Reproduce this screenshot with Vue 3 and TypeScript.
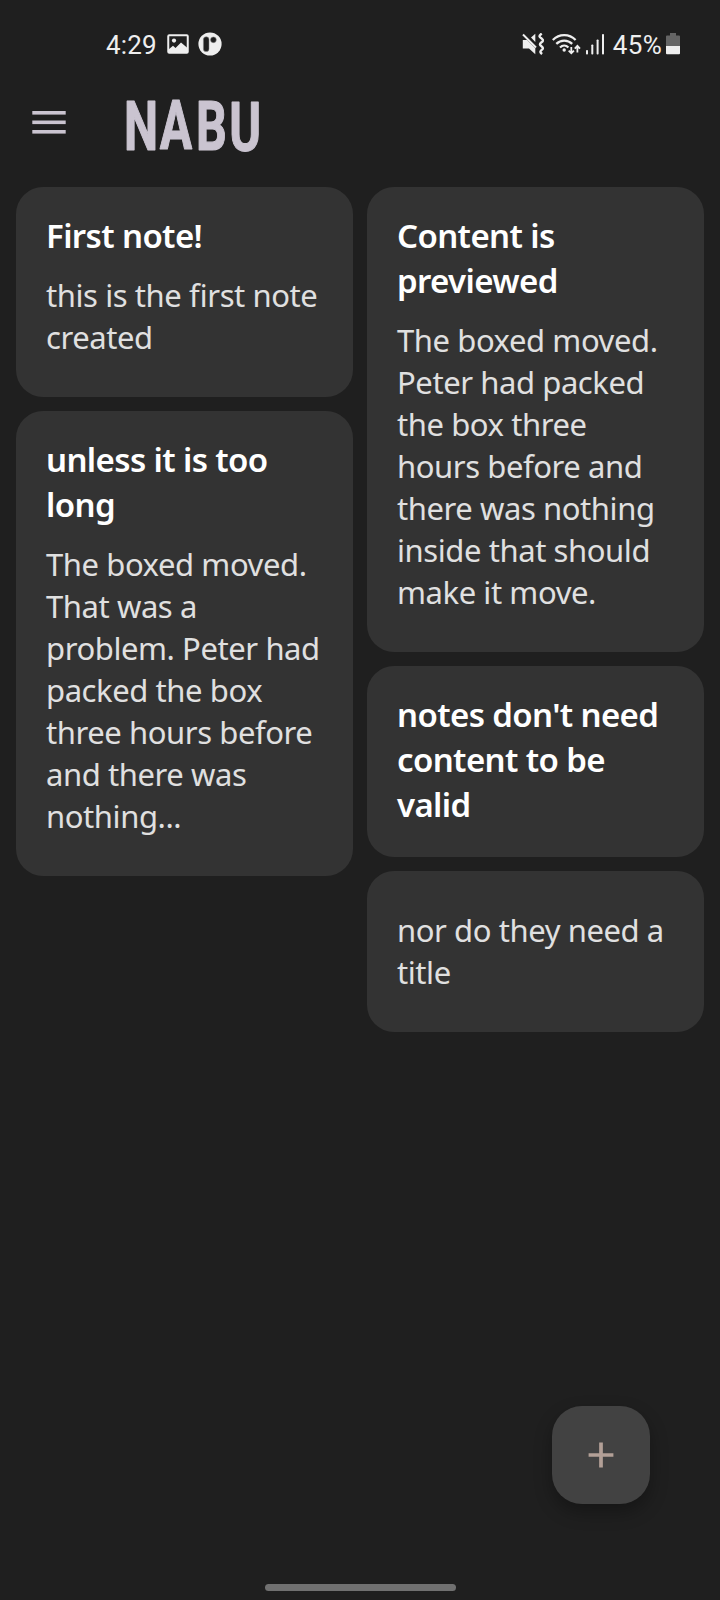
<script setup lang="ts">
interface Note {
  id: number
  title?: string
  body?: string
}

const columns: Note[][] = [
  [
    { id: 1, title: 'First note!', body: 'this is the first note created' },
    {
      id: 2,
      title: 'unless it is too long',
      body: 'The boxed moved. That was a problem. Peter had packed the box three hours before and there was nothing...',
    },
  ],
  [
    {
      id: 3,
      title: 'Content is previewed',
      body: 'The boxed moved. Peter had packed the box three hours before and there was nothing inside that should make it move.',
    },
    { id: 4, title: "notes don't need content to be valid" },
    { id: 5, body: 'nor do they need a title' },
  ],
]
</script>

<template>
  <div class="screen">
    <header class="status">
      <div class="status-left">
        <span class="clock">4:29</span>
        <svg class="picture" width="22" height="20" viewBox="0 0 22 20">
          <rect x="1.25" y="1.25" width="19.5" height="17.5" rx="1" fill="none" stroke="#eee" stroke-width="2" />
          <circle cx="7" cy="6.6" r="2.1" fill="#eee" />
          <path d="M1.5 15.5 6 11.7l2.5 2.2L14 8.5l6.5 5.5v5h-19z" fill="#eee" />
        </svg>
        <svg class="badge" width="24" height="24" viewBox="0 0 24 24">
          <circle cx="12" cy="12" r="11.6" fill="#eee" />
          <rect x="5.4" y="4.8" width="5.6" height="14.8" rx="2.7" fill="#1f1f1f" stroke="#888" stroke-width=".5" />
          <circle cx="15.4" cy="7.8" r="2.9" fill="#1f1f1f" stroke="#888" stroke-width=".5" />
        </svg>
      </div>
      <div class="status-right">
        <svg class="mute" width="22" height="22" viewBox="0 0 22 22">
          <path d="M.8 7h4.300l8.200 8.200v6L7 15.600H.8z" fill="#eee" />
          <path d="M9 4.400 13.300.8v8.100z" fill="#eee" />
          <path d="M1 1.500 14 14.500" stroke="#eee" stroke-width="2" />
          <path d="M19.700.5c-3 2.400-3 3 0 5.100 2 1.600 1.400 2.600-.6 4-1.700 1.600-1.400 2.200.5 3.800 2 1.800 1.600 2.500-.4 4-1.300 1.300-1 2 .9 3.600" fill="none" stroke="#eee" stroke-width="2.400" />
        </svg>
        <svg class="wifi" width="30" height="23" viewBox="0 0 30 23" fill="none" stroke="#eee" stroke-width="2.200">
          <path d="M.8 7.100c6.300-6.600 16.500-6.600 22.800 0" />
          <path d="M4.300 10.900c4.500-4.500 11.400-4.500 15.900 0" />
          <path d="M8 14.500c2.400-2.400 6-2.400 8.400 0" />
          <circle cx="12.200" cy="17" r="1.700" fill="#eee" stroke="none" />
          <path d="M19.300 14v6M16.700 17.600l2.600 2.700 2.600-2.700" stroke-width="1.800" />
          <path d="M25.400 19.500v-6M22.800 15.600l2.600-2.700 2.600 2.700" stroke-width="1.800" />
        </svg>
        <svg class="signal" width="19" height="21" viewBox="0 0 19 21" fill="#eee">
          <rect x="0" y="16" width="2" height="4.500" rx=".8" />
          <rect x="5.300" y="10.500" width="2" height="10" rx=".8" />
          <rect x="10.600" y="5.500" width="2" height="15" rx=".8" />
          <rect x="16" y="0" width="2" height="20.500" rx=".8" />
        </svg>
        <span class="percent">45%</span>
        <svg class="battery" width="14" height="22" viewBox="0 0 14 22">
          <path d="M4 0h6v2.600h3a1 1 0 0 1 1 1V13H0V3.600a1 1 0 0 1 1-1h3z" fill="#656565" />
          <path d="M0 13h14v7.300a1 1 0 0 1-1 1H1a1 1 0 0 1-1-1z" fill="#eee" />
        </svg>
      </div>
    </header>

    <nav class="toolbar">
      <button class="menu" aria-label="Menu">
        <svg width="34" height="24" viewBox="0 0 34 24" fill="#cac4d0">
          <rect x=".3" y="0" width="33.400" height="3.600" />
          <rect x=".3" y="9.500" width="33.400" height="3.600" />
          <rect x=".3" y="19" width="33.400" height="3.600" />
        </svg>
      </button>
      <svg class="logo" width="136" height="56" viewBox="0 0 136 56" role="img">
        <text class="wordmark" transform="scale(.7 1)" x="-1.500 49.500 101.500 149" y="51.500 51.200 51.800 53">NABU</text>
      </svg>
    </nav>

    <main class="board">
      <div v-for="(column, index) in columns" :key="index" class="column">
        <article v-for="note in column" :key="note.id" class="note">
          <h2 v-if="note.title" class="title">{{ note.title }}</h2>
          <p v-if="note.body" class="body" :class="{ lone: !note.title }">{{ note.body }}</p>
        </article>
      </div>
    </main>

    <button class="fab" aria-label="Add note">
      <svg width="26" height="26" viewBox="0 0 26 26">
        <path d="M13 .6v24.800M.6 13h24.800" stroke="#b3a097" stroke-width="3.700" />
      </svg>
    </button>
    <div class="home"></div>
  </div>
</template>

<style>
body {
  background: #1f1f1f;
}
</style>

<style scoped>
.screen {
  box-sizing: border-box;
  width: 720px;
  height: 1600px;
  display: flex;
  flex-direction: column;
  overflow: hidden;
  background: #1f1f1f;
  font-family: "Noto Sans", sans-serif;
}
.status {
  height: 88px;
  box-sizing: border-box;
  padding: 0 40px 0 106px;
  display: flex;
  align-items: center;
  justify-content: space-between;
  color: #eee;
  font-family: Roboto, sans-serif;
  font-size: 26px;
  line-height: 30px;
}
.status-left,
.status-right {
  display: flex;
  align-items: center;
}
.clock,
.percent {
  position: relative;
  top: 1px;
}
.clock { letter-spacing: 0.2px; }
.picture { margin-left: 10px; }
.badge { margin-left: 9px; }
.wifi { margin-left: 8px; }
.signal { margin-left: 4px; }
.percent {
  margin-left: 8px;
  letter-spacing: 0.3px;
}
.battery { margin-left: 4px; }
.toolbar {
  height: 99px;
  padding-left: 32px;
  display: flex;
}
button {
  border: 0;
  padding: 0;
}
.menu {
  width: 34px;
  height: 24px;
  margin-top: 23px;
  display: flex;
  background: none;
}
.logo {
  margin: 10px 0 0 59px;
  overflow: visible;
}
.wordmark {
  font: 700 69px Roboto, sans-serif;
  fill: #cac4d0;
  stroke: #cac4d0;
  stroke-width: 1.2px;
  stroke-linejoin: bevel;
}
.board {
  flex: 1;
  padding: 0 16px;
  display: flex;
  align-items: flex-start;
  gap: 14px;
}
.column {
  flex: 1;
  min-width: 0;
  display: flex;
  flex-direction: column;
  gap: 14px;
}
.note {
  padding: 26px 30px 30px;
  border-radius: 27px;
  background: #333;
}
.title {
  margin: 0;
  color: #fff;
  font-size: 33px;
  font-weight: 600;
  line-height: 45px;
  letter-spacing: -0.62px;
}
.body {
  margin: 16px 0 9px;
  color: #e0e0e0;
  font-size: 31px;
  line-height: 42px;
  letter-spacing: -0.42px;
  font-feature-settings: "liga" 1;
}
.body.lone {
  margin-top: 12px;
}
.fab {
  width: 98px;
  height: 98px;
  flex: none;
  align-self: flex-end;
  margin: 0 70px 80px 0;
  border-radius: 30px;
  display: flex;
  align-items: center;
  justify-content: center;
  background: #424242;
  box-shadow: 0 8px 18px rgba(0, 0, 0, 0.3);
}
.home {
  width: 191px;
  height: 7px;
  flex: none;
  align-self: center;
  margin-bottom: 9px;
  border-radius: 4px;
  background: #707070;
}
</style>
